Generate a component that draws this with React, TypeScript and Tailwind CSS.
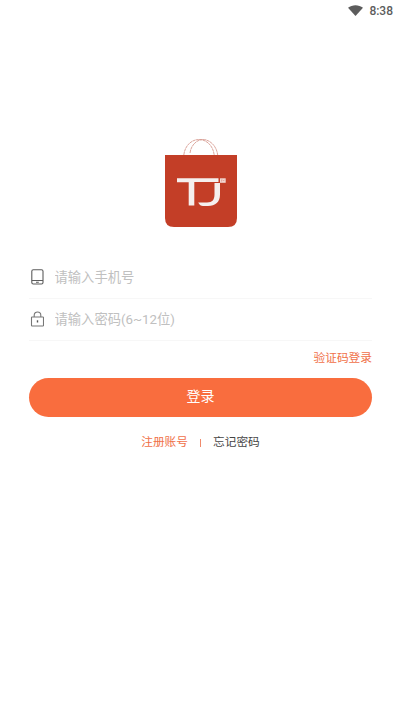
function StatusBar() {
  return (
    <header className="flex h-[22px] items-center justify-end pr-[7px] text-[#5c5c5c]">
      <svg className="mb-[2px] mr-[6px] h-[11px] w-[15px]" viewBox="0 0 15 11" fill="currentColor">
        <path d="M0 2.7C4.2-.7 10.8-.7 15 2.7L7.5 11z" />
      </svg>
      <span className="text-[12px] font-medium leading-[22px]">8:38</span>
    </header>
  );
}

function BagLogo() {
  return (
    <svg className="h-[90px] w-[74px]" viewBox="0 0 74 90" fill="none">
      <g stroke="#d28f84" strokeWidth=".8" strokeDasharray="3 .4">
        <path d="M19.800 17C21 7 28 1.500 35 1.500S49 7 50.200 17" />
        <path d="M26 15C27 7 33 1.500 39 1.500S52.500 7 53.700 17" />
      </g>
      <path d="M1 17H73V80Q73 89 64 89H10Q1 89 1 80Z" fill="#c33e27" />
      <path d="M13 40.300H54.500V44H30.300V67.500H24.700V44.300H13Z" fill="#f5efee" />
      <path d="M50.500 45H56V56.500C56 64 51.500 68 44 68H39Q36 68 34.200 64.500H43C48.500 64.500 50.500 61.500 50.500 56.500Z" fill="#f5efee" />
      <path d="M56 40.300H61.700V44.800H56Z" fill="#f2d8d3" />
      <path d="M57.500 41.500V43.500M58.500 41.700L59.500 43L60.500 41.700" stroke="#d98b7d" strokeWidth=".6" />
    </svg>
  );
}

function PhoneIcon() {
  return (
    <svg className="mb-[1px] h-[16px] w-[14px]" viewBox="0 0 14 16" fill="none" stroke="#5c5c5c" strokeWidth="1.1">
      <rect x="1.800" y=".8" width="11.200" height="14.200" rx="1.500" />
      <path d="M1.800 11.500H13M6 13.300H8.800" />
    </svg>
  );
}

function LockIcon() {
  return (
    <svg className="mb-[2px] h-[16px] w-[14px]" viewBox="0 0 14 16" fill="none" stroke="#777" strokeWidth="1.1">
      <rect x="1.500" y="6" width="12" height="9" rx=".6" />
      <path d="M4.200 6V4.200C4.200 -.1 10.800 -.1 10.800 4.200V6" />
      <path d="M7.500 9.300V11.500" stroke="#555" strokeWidth="1.400" />
    </svg>
  );
}

export default function App() {
  return (
    <main className="flex h-[710px] w-[400px] flex-col bg-white font-['Roboto','Noto_Sans_CJK_SC',sans-serif]">
      <StatusBar />
      <div className="mt-[116px] flex justify-center pl-[2px]">
        <BagLogo />
      </div>
      <form className="mt-[29px] flex flex-col pl-[29px] pr-[28px]">
        <label className="flex h-[42px] items-center gap-[10.5px] border-b border-[#f7f7f7] pl-[1px]">
          <PhoneIcon />
          <input className="w-[240px] text-[13.3px] leading-5 outline-none placeholder:text-[#c0c0c0]" placeholder="请输入手机号" />
        </label>
        <label className="flex h-[42px] items-center gap-[10.5px] border-b border-[#f7f7f7] pl-[1px]">
          <LockIcon />
          <input className="w-[240px] text-[13.3px] leading-5 outline-none placeholder:text-[#c0c0c0]" placeholder="请输入密码(6~12位)" />
        </label>
        <button type="button" className="mt-[8px] self-end text-[11.7px] leading-[18px] text-[#f07048]">验证码登录</button>
        <button type="button" className="mt-[11px] h-[39px] rounded-[20px] bg-[#f96d3e] pb-[3px] text-[14px] leading-5 text-white">登录</button>
      </form>
      <nav className="mt-[16px] flex h-[18px] items-center justify-center pl-[1px] text-[11.7px] leading-[18px]">
        <a className="text-[#f07048]">注册账号</a>
        <span className="ml-[12px] mr-[12px] mt-[2px] h-[8px] w-px bg-[#f08a6c]" />
        <a className="text-[#444]">忘记密码</a>
      </nav>
    </main>
  );
}
